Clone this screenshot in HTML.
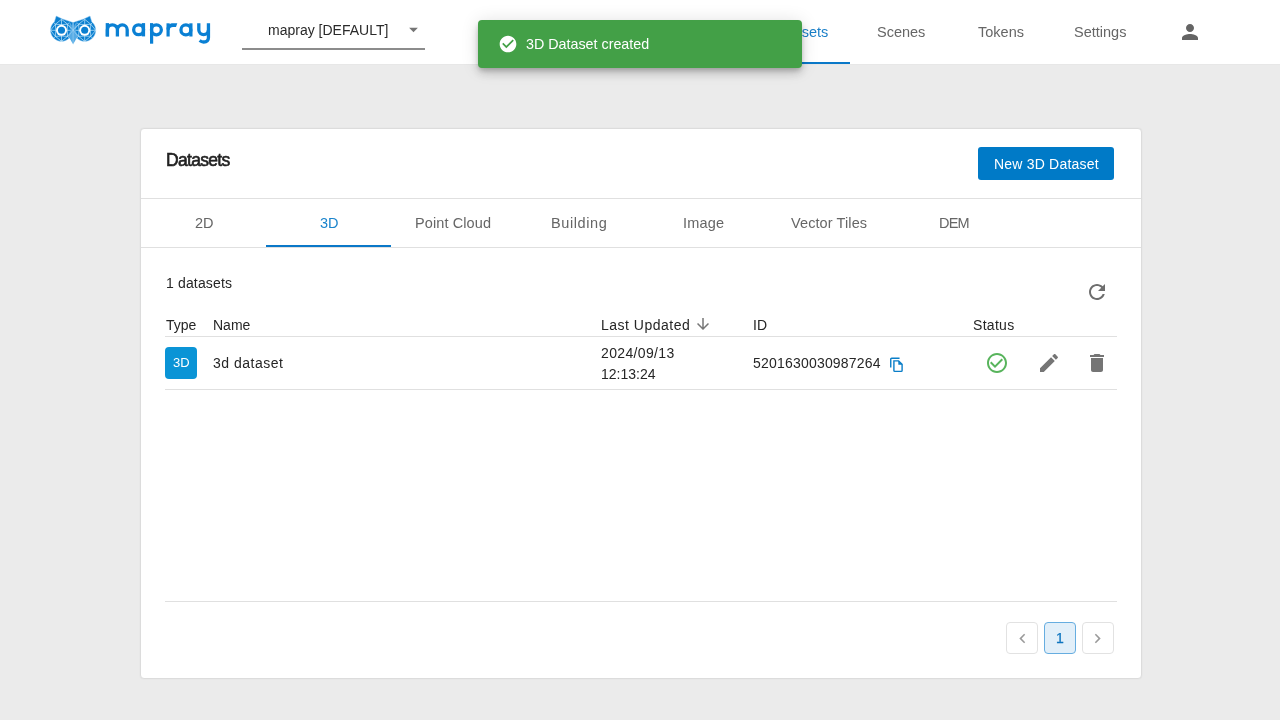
<!DOCTYPE html>
<html><head><meta charset="utf-8">
<style>
*{box-sizing:border-box;margin:0;padding:0}
html,body{width:1280px;height:720px;overflow:hidden}
body{background:#ebebeb;font-family:"Liberation Sans",sans-serif;position:relative;color:#333}
.abs{position:absolute}
.t{position:absolute;white-space:nowrap;line-height:1;will-change:transform}
#hdr{left:0;top:0;width:1280px;height:64px;background:#fff;box-shadow:0 1px 0 #e7e7e7}
.nav{font-size:14.5px;color:#666}
#card{left:140px;top:128px;width:1002px;height:551px;background:#fff;border:1px solid #dcdcdc;border-radius:4px;box-shadow:0 0 2px rgba(0,0,0,.05)}
.hl{position:absolute;height:1px;background:#e0e0e0}
.tab{font-size:14.5px;color:#666}
.th{font-size:14px;color:#262626}
.td{font-size:14px;color:#262626}
.pg{position:absolute;width:32px;height:32px;border:1px solid #e2e2e2;border-radius:4px;background:#fff}
</style></head><body>
<div id="hdr" class="abs">
  <!-- logo -->
  <svg class="abs" style="left:0;top:0" width="220" height="64" viewBox="0 0 220 64"><polygon points="56.20,16.00 62.50,19.00 68.50,20.90 73.10,22.60 73.10,36.50 69.93,23.23 71.03,24.80 71.84,26.54 72.33,28.39 72.50,30.30 72.33,32.21 71.84,34.06 71.03,35.80 69.93,37.37 68.57,38.73 67.00,39.83 65.26,40.64 63.41,41.13 61.50,41.30 59.59,41.13 57.74,40.64 56.00,39.83 54.43,38.73 53.07,37.37 51.97,35.80 51.16,34.06 50.67,32.21 50.50,30.30 50.67,28.39 51.16,26.54 51.97,24.80 53.07,23.23 54.43,21.87" fill="#0b7fd0" stroke="rgba(150,205,242,0.7)" stroke-width="0.7"/><path d="M66.90 30.30L72.50 30.30 M61.50 35.70L61.50 41.30 M56.10 30.30L50.50 30.30 M61.50 24.90L61.50 19.30 M67.58 36.38L67.20 30.30 M67.58 36.38L72.50 30.30 M67.58 36.38L61.50 36.00 M67.58 36.38L61.50 41.30 M67.58 36.38L69.28 38.08 M55.42 36.38L61.50 36.00 M55.42 36.38L61.50 41.30 M55.42 36.38L55.80 30.30 M55.42 36.38L50.50 30.30 M55.42 36.38L53.72 38.08 M55.42 24.22L55.80 30.30 M55.42 24.22L50.50 30.30 M55.42 24.22L61.50 24.60 M55.42 24.22L61.50 19.30 M55.42 24.22L53.72 22.52 M67.58 24.22L61.50 24.60 M67.58 24.22L61.50 19.30 M67.58 24.22L67.20 30.30 M67.58 24.22L72.50 30.30 M67.58 24.22L69.28 22.52" stroke="rgba(205,235,252,0.85)" stroke-width="0.8" fill="none"/><circle cx="61.50" cy="30.3" r="5.5" fill="#fff"/><circle cx="61.50" cy="30.3" r="3.55" fill="#0b7fd0"/><polygon points="90.00,16.00 83.70,19.00 77.70,20.90 73.10,22.60 73.10,36.50 76.27,23.23 75.17,24.80 74.36,26.54 73.87,28.39 73.70,30.30 73.87,32.21 74.36,34.06 75.17,35.80 76.27,37.37 77.63,38.73 79.20,39.83 80.94,40.64 82.79,41.13 84.70,41.30 86.61,41.13 88.46,40.64 90.20,39.83 91.77,38.73 93.13,37.37 94.23,35.80 95.04,34.06 95.53,32.21 95.70,30.30 95.53,28.39 95.04,26.54 94.23,24.80 93.13,23.23 91.77,21.87" fill="#0b7fd0" stroke="rgba(150,205,242,0.7)" stroke-width="0.7"/><path d="M90.10 30.30L95.70 30.30 M84.70 35.70L84.70 41.30 M79.30 30.30L73.70 30.30 M84.70 24.90L84.70 19.30 M90.78 36.38L90.40 30.30 M90.78 36.38L95.70 30.30 M90.78 36.38L84.70 36.00 M90.78 36.38L84.70 41.30 M90.78 36.38L92.48 38.08 M78.62 36.38L84.70 36.00 M78.62 36.38L84.70 41.30 M78.62 36.38L79.00 30.30 M78.62 36.38L73.70 30.30 M78.62 36.38L76.92 38.08 M78.62 24.22L79.00 30.30 M78.62 24.22L73.70 30.30 M78.62 24.22L84.70 24.60 M78.62 24.22L84.70 19.30 M78.62 24.22L76.92 22.52 M90.78 24.22L84.70 24.60 M90.78 24.22L84.70 19.30 M90.78 24.22L90.40 30.30 M90.78 24.22L95.70 30.30 M90.78 24.22L92.48 22.52" stroke="rgba(205,235,252,0.85)" stroke-width="0.8" fill="none"/><circle cx="84.70" cy="30.3" r="5.5" fill="#fff"/><circle cx="84.70" cy="30.3" r="3.55" fill="#0b7fd0"/><polygon points="73.1,23 77.8,36.3 73.1,44.3 68.4,36.3" fill="#56abe5"/><path d="M73.1 23V44.3M68.4 36.3L73.1 30 77.8 36.3M68.6 24.8L73.1 30 77.6 24.8" stroke="rgba(200,232,252,0.7)" stroke-width="0.6" fill="none"/><g fill="#0a80d4"><rect x="105.7" y="23.1" width="3.35" height="13.3"/><rect x="141.75" y="23.1" width="3.35" height="13.3"/><rect x="150" y="23.1" width="3.2" height="20.6"/><rect x="166.5" y="23.3" width="3.2" height="13.2"/><rect x="189.3" y="23.3" width="3.2" height="13.2"/><path d="M166.5 29.5C166.5 25.5 169.3 23.3 173 23.3L177.3 23.3 176 27.1 173 27.1C171 27.1 169.7 28.3 169.7 30Z"/></g><g fill="none" stroke="#0a80d4" stroke-width="3.3"><path d="M107.4 36.4V29.8A5 5 0 0 1 117.4 29.8V36.4M117.4 29.8A4.9 4.9 0 0 1 127.2 29.8V36.4"/><circle cx="138.6" cy="29.75" r="4.95"/><circle cx="156.4" cy="29.85" r="4.95"/><circle cx="185.9" cy="29.9" r="4.95"/><path d="M198.8 23.3V30A4.83 4.83 0 0 0 208.45 30"/><path d="M208.45 23.3V37.5C208.45 40.6 206.2 42 203.6 42C202 42 200.8 41.4 199.6 40.5"/></g></svg>
  <!-- dropdown -->
  <div class="t" style="left:268px;top:23px;font-size:14px;color:#2a2a2a">mapray [DEFAULT]</div>
  <svg class="abs" style="left:403px;top:18.6px" width="21" height="21" viewBox="0 0 24 24"><path d="M7 10l5 5 5-5z" fill="#757575"/></svg>
  <div class="abs" style="left:242px;top:48px;width:183px;height:2px;background:#8c8c8c"></div>
  <!-- nav -->
  <div class="t nav" style="left:771px;top:25px;color:#1a7fc8">Datasets</div>
  <div class="abs" style="left:750px;top:62px;width:100px;height:2px;background:#0a78c8"></div>
  <div class="t nav" style="left:877px;top:25px">Scenes</div>
  <div class="t nav" style="left:978px;top:25px">Tokens</div>
  <div class="t nav" style="left:1074px;top:25px">Settings</div>
  <svg class="abs" style="left:1178px;top:20px" width="24" height="24" viewBox="0 0 24 24"><path fill="#646464" d="M12 12c2.21 0 4-1.79 4-4s-1.79-4-4-4-4 1.79-4 4 1.79 4 4 4zm0 2c-2.67 0-8 1.34-8 4v2h16v-2c0-2.66-5.33-4-8-4z"/></svg>
</div>

<div id="card" class="abs">
</div>
<!-- card content -->
<div class="t" style="left:166px;top:151.5px;font-size:17.5px;color:#222;letter-spacing:-0.7px;-webkit-text-stroke:0.6px #222">Datasets</div>
<div class="abs" style="left:978px;top:147px;width:136px;height:33px;background:#007ac7;border-radius:3px"></div>
<div class="t" style="left:994px;top:157px;font-size:14px;color:#fff;letter-spacing:0.2px">New 3D Dataset</div>
<div class="hl" style="left:141px;top:198px;width:1000px"></div>
<div class="t tab" style="left:195px;top:216px">2D</div>
<div class="t tab" style="left:320px;top:216px;color:#1a84cc">3D</div>
<div class="t tab" style="left:415px;top:216px;letter-spacing:0.1px">Point Cloud</div>
<div class="t tab" style="left:551px;top:216px;letter-spacing:0.6px">Building</div>
<div class="t tab" style="left:683px;top:216px;letter-spacing:0.2px">Image</div>
<div class="t tab" style="left:791px;top:216px;letter-spacing:0.1px">Vector Tiles</div>
<div class="t tab" style="left:939px;top:216px;letter-spacing:-0.8px">DEM</div>
<div class="abs" style="left:266px;top:245px;width:125px;height:2px;background:#0a78c8"></div>
<div class="hl" style="left:141px;top:247px;width:1000px"></div>

<div class="t td" style="left:166px;top:276px;letter-spacing:0.15px">1 datasets</div>
<svg class="abs" style="left:1085px;top:280px" width="24" height="24" viewBox="0 0 24 24"><path fill="#6e6e6e" d="M17.65 6.35C16.2 4.9 14.21 4 12 4c-4.42 0-7.99 3.58-7.99 8s3.57 8 7.99 8c3.73 0 6.84-2.55 7.73-6h-2.08c-.82 2.330-3.04 4-5.65 4-3.31 0-6-2.69-6-6s2.69-6 6-6c1.660 0 3.14.69 4.22 1.78L13 11h7V4l-2.35 2.35z"/></svg>

<div class="t th" style="left:166px;top:318px">Type</div>
<div class="t th" style="left:213px;top:318px">Name</div>
<div class="t th" style="left:601px;top:318px;letter-spacing:0.5px">Last Updated</div>
<svg class="abs" style="left:694px;top:315px" width="18" height="18" viewBox="0 0 24 24"><path fill="#777" d="M20 12l-1.41-1.41L13 16.17V4h-2v12.17l-5.58-5.59L4 12l8 8 8-8z"/></svg>
<div class="t th" style="left:753px;top:318px">ID</div>
<div class="t th" style="left:973px;top:318px;letter-spacing:0.3px">Status</div>
<div class="hl" style="left:165px;top:336px;width:952px"></div>

<div class="abs" style="left:165px;top:347px;width:32px;height:32px;background:#0a94d6;border-radius:4px"></div>
<div class="t" style="left:173px;top:356px;font-size:13px;color:#fff">3D</div>
<div class="t td" style="left:213px;top:356px;letter-spacing:0.5px">3d dataset</div>
<div class="t td" style="left:601px;top:346px;letter-spacing:0.35px">2024/09/13</div>
<div class="t td" style="left:601px;top:367px">12:13:24</div>
<div class="t td" style="left:753px;top:356px;letter-spacing:0.2px">5201630030987264</div>
<svg class="abs" style="left:888px;top:356px" width="18" height="18" viewBox="0 0 18 18"><path fill="none" stroke="#0a7ec8" stroke-width="1.4" d="M2.75 11.6V3.1c0-.5.4-.9.9-.9h7.9"/><path fill="none" stroke="#0a7ec8" stroke-width="1.4" d="M5.9 4.9h4.7l3.5 3.5v6.2c0 .5-.4.8-.8.8H6.7c-.5 0-.8-.3-.8-.8z"/><path fill="#0a7ec8" d="M10.3 4.9v3.9h3.9z"/></svg>
<svg class="abs" style="left:985px;top:351px" width="24" height="24" viewBox="0 0 24 24"><path fill="#58b45c" d="M16.59 7.58L10 14.17l-3.59-3.58L5 12l5 5 8-8zM12 2C6.48 2 2 6.48 2 12s4.48 10 10 10 10-4.48 10-10S17.52 2 12 2zm0 18c-4.42 0-8-3.58-8-8s3.580-8 8-8 8 3.58 8 8-3.58 8-8 8z"/></svg>
<svg class="abs" style="left:1037px;top:351px" width="24" height="24" viewBox="0 0 24 24"><path fill="#757575" d="M3 17.25V21h3.75L17.81 9.94l-3.75-3.75L3 17.25zM20.71 7.04c.39-.39.39-1.02 0-1.41l-2.34-2.34c-.39-.39-1.02-.39-1.41 0l-1.83 1.830 3.75 3.75 1.83-1.83z"/></svg>
<svg class="abs" style="left:1085px;top:351px" width="24" height="24" viewBox="0 0 24 24"><path fill="#757575" d="M6 19c0 1.1.9 2 2 2h8c1.1 0 2-.9 2-2V7H6v12zM19 4h-3.5l-1-1h-5l-1 1H5v2h14V4z"/></svg>
<div class="hl" style="left:165px;top:389px;width:952px"></div>

<div class="hl" style="left:165px;top:601px;width:952px"></div>
<div class="pg" style="left:1006px;top:622px"></div>
<svg class="abs" style="left:1012.6px;top:628.6px" width="19" height="19" viewBox="0 0 24 24"><path fill="#9a9a9a" d="M15.41 7.41L14 6l-6 6 6 6 1.41-1.41L10.83 12z"/></svg>
<div class="pg" style="left:1044px;top:622px;background:#e2eff9;border-color:#66ade0"></div>
<div class="t" style="left:1056px;top:631px;font-size:14px;color:#0e74bf;-webkit-text-stroke:0.25px #0e74bf">1</div>
<div class="pg" style="left:1082px;top:622px"></div>
<svg class="abs" style="left:1088.2px;top:628.6px" width="19" height="19" viewBox="0 0 24 24"><path fill="#9a9a9a" d="M10 6L8.59 7.41 13.17 12l-4.58 4.59L10 18l6-6z"/></svg>

<!-- toast -->
<div class="abs" style="left:478px;top:20px;width:324px;height:48px;background:#43a047;border-radius:4px;box-shadow:0 3px 5px -1px rgba(0,0,0,.2),0 6px 10px 0 rgba(0,0,0,.14),0 1px 18px 0 rgba(0,0,0,.12)">
  <svg class="abs" style="left:20px;top:14px" width="20" height="20" viewBox="0 0 24 24"><path fill="#fff" d="M12 2C6.48 2 2 6.48 2 12s4.48 10 10 10 10-4.48 10-10S17.52 2 12 2zm-2 15l-5-5 1.41-1.41L10 14.17l7.59-7.59L19 8l-9 9z"/></svg>
  <div class="t" style="left:48px;top:17px;font-size:14.3px;color:#fff">3D Dataset created</div>
</div>
</body></html>
